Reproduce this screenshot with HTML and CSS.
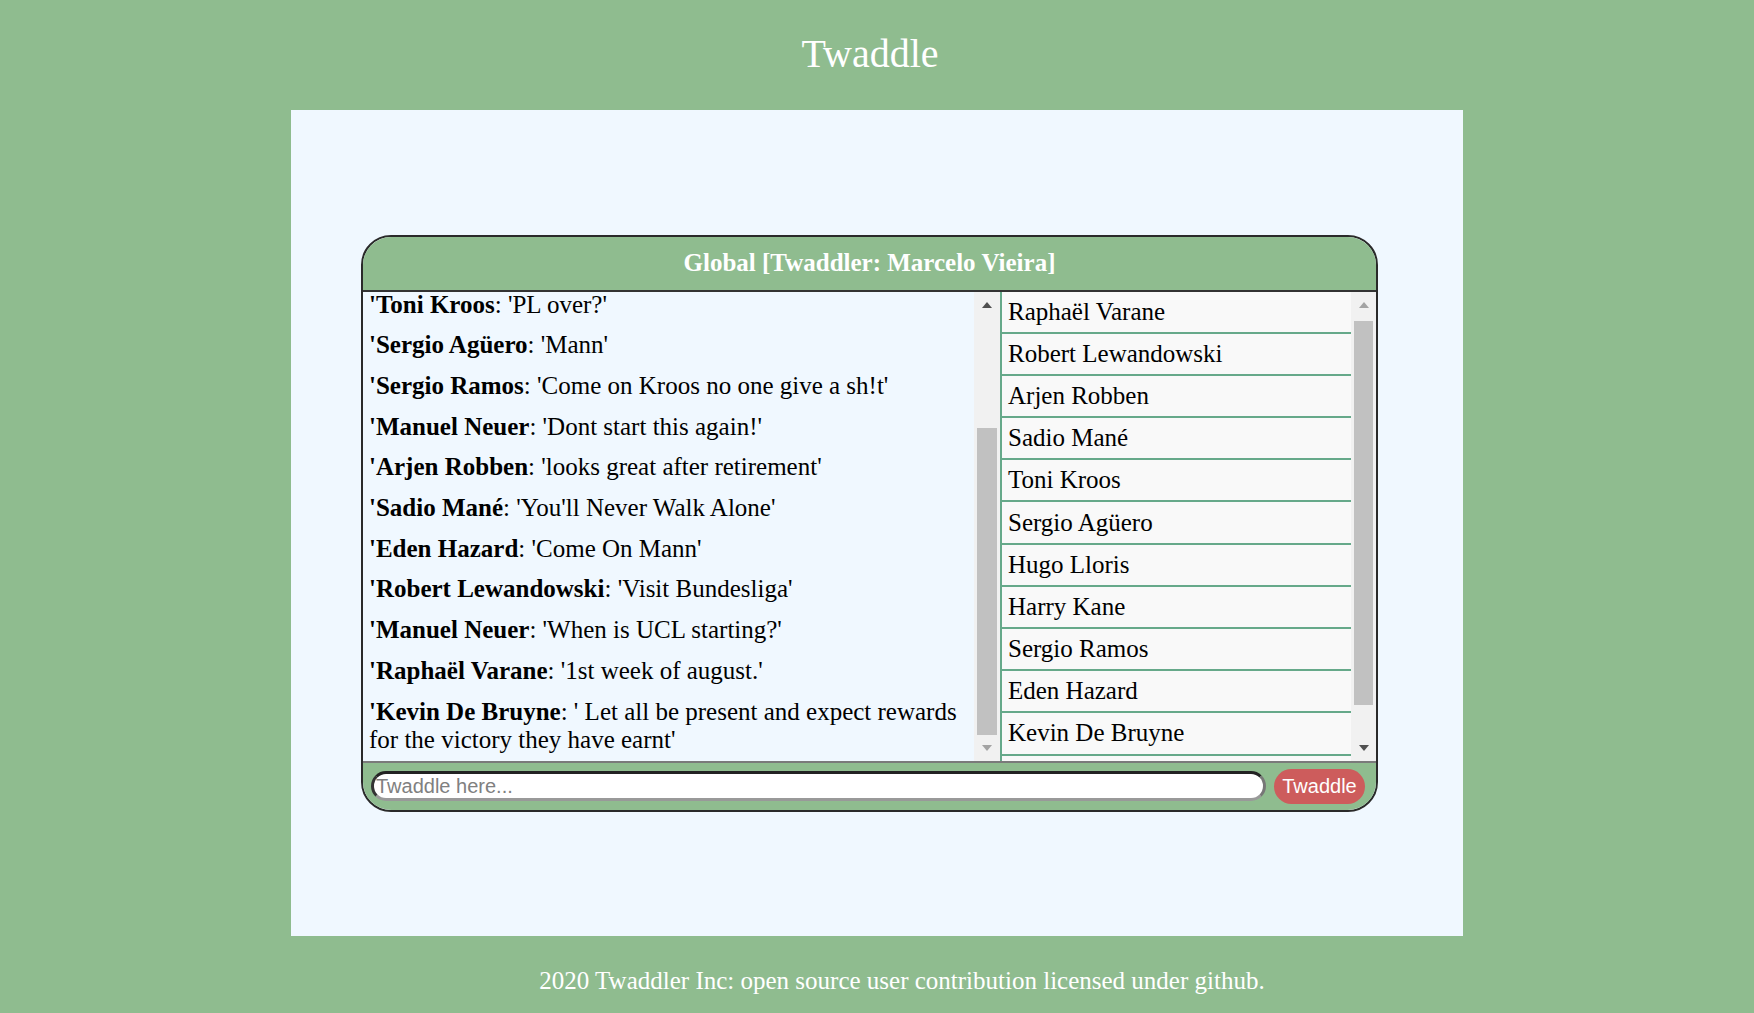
FILE: index.html
```html
<!DOCTYPE html>
<html>
<head>
<meta charset="utf-8">
<title>Twaddle</title>
<link rel="stylesheet" href="styles.css">
</head>
<body>
<h1 class="title">Twaddle</h1>
<main class="container">
  <section class="chat">
    <div class="chat-header">Global [Twaddler: Marcelo Vieira]</div>
    <div class="chat-body">
      <div class="messages">
        <div class="msg"><b>'Toni Kroos</b>: 'PL over?'</div>
        <div class="msg"><b>'Sergio Agüero</b>: 'Mann'</div>
        <div class="msg"><b>'Sergio Ramos</b>: 'Come on Kroos no one give a sh!t'</div>
        <div class="msg"><b>'Manuel Neuer</b>: 'Dont start this again!'</div>
        <div class="msg"><b>'Arjen Robben</b>: 'looks great after retirement'</div>
        <div class="msg"><b>'Sadio Mané</b>: 'You'll Never Walk Alone'</div>
        <div class="msg"><b>'Eden Hazard</b>: 'Come On Mann'</div>
        <div class="msg"><b>'Robert Lewandowski</b>: 'Visit Bundesliga'</div>
        <div class="msg"><b>'Manuel Neuer</b>: 'When is UCL starting?'</div>
        <div class="msg"><b>'Raphaël Varane</b>: '1st week of august.'</div>
        <div class="msg"><b>'Kevin De Bruyne</b>: ' Let all be present and expect rewards for the victory they have earnt'</div>
      </div>
      <div class="sb sb-msg">
        <div class="sb-btn"><span class="arrow up dark"></span></div>
        <div class="sb-track"><div class="sb-thumb" style="margin-top:110px;height:307px"></div></div>
        <div class="sb-btn"><span class="arrow down light"></span></div>
      </div>
      <ul class="users">
        <li>Raphaël Varane</li>
        <li>Robert Lewandowski</li>
        <li>Arjen Robben</li>
        <li>Sadio Mané</li>
        <li>Toni Kroos</li>
        <li>Sergio Agüero</li>
        <li>Hugo Lloris</li>
        <li>Harry Kane</li>
        <li>Sergio Ramos</li>
        <li>Eden Hazard</li>
        <li>Kevin De Bruyne</li>
        <li>Manuel Neuer</li>
      </ul>
      <div class="sb sb-users">
        <div class="sb-btn"><span class="arrow up light"></span></div>
        <div class="sb-track"><div class="sb-thumb" style="margin-top:3px;height:384px"></div></div>
        <div class="sb-btn"><span class="arrow down dark"></span></div>
      </div>
    </div>
    <form class="chat-input">
      <input class="text" type="text" placeholder="Twaddle here...">
      <button class="send" type="button">Twaddle</button>
    </form>
  </section>
</main>
<footer class="footer">2020 Twaddler Inc: open source user contribution licensed under github.</footer>
</body>
</html>
```
FILE: styles.css
```css
html, body {
  margin: 0;
  padding: 0;
}
body {
  background: #8fbc8f;
  font-family: "Liberation Serif", "Times New Roman", serif;
  font-size: 25px;
  color: #000;
}
.title {
  margin: 0;
  height: 110px;
  padding: 31px 14px 0 0;
  box-sizing: border-box;
  text-align: center;
  color: #fff;
  font-weight: normal;
  font-size: 40px;
  line-height: 46px;
}
.container {
  width: 1172px;
  height: 826px;
  margin: 0 auto;
  background: #f0f8ff;
  display: flex;
  align-items: center;
}
.chat {
  width: 1013px;
  margin-left: 70px;
  border: 2px solid #2a2a2a;
  border-radius: 30px;
  overflow: hidden;
  background: #f0f8ff;
}
.chat-header {
  height: 53px;
  background: #8fbc8f;
  border-bottom: 2px solid #333;
  color: #fff;
  font-weight: bold;
  font-size: 25px;
  display: flex;
  align-items: center;
  justify-content: center;
}
.chat-body {
  display: flex;
  height: 469px;
}
.messages {
  width: 611px;
  box-sizing: border-box;
  padding: 0 6px;
  overflow: hidden;
  background: #f0f8ff;
}
.msg {
  line-height: 28.7px;
  margin-bottom: 12px;
}
.msg:first-child {
  margin-top: -1px;
}
.sb {
  display: flex;
  flex-direction: column;
  background: #f1f1f1;
}
.sb-msg {
  width: 26px;
}
.sb-users {
  width: 25px;
}
.sb-btn {
  height: 26px;
  display: flex;
  align-items: center;
  justify-content: center;
}
.sb-track {
  flex: 1;
  padding: 0 3px;
}
.sb-thumb {
  background: #c1c1c1;
}
.arrow {
  width: 0;
  height: 0;
  border-left: 5.5px solid transparent;
  border-right: 5.5px solid transparent;
}
.arrow.up {
  border-bottom: 6px solid #505050;
}
.arrow.down {
  border-top: 6px solid #505050;
}
.arrow.up.light {
  border-bottom-color: #a3a3a3;
}
.arrow.down.light {
  border-top-color: #a3a3a3;
}
.users {
  list-style: none;
  margin: 0;
  padding: 0;
  width: 349px;
  border-left: 2px solid #66a98a;
  background: #f9f9f9;
  overflow: hidden;
}
.users li {
  height: 40.2px;
  border-bottom: 2px solid #66a98a;
  padding-left: 6px;
  display: flex;
  align-items: center;
  font-size: 25px;
}
.chat-input {
  margin: 0;
  height: 47px;
  background: #8fbc8f;
  border-top: 2px solid #7a7a7a;
  display: flex;
  align-items: center;
  padding: 0 11px 0 8px;
  gap: 8px;
}
.text {
  flex: 1;
  height: 30px;
  box-sizing: border-box;
  border-radius: 15px;
  border-style: solid;
  border-width: 3px;
  border-color: #222 #777 #999 #333;
  background: #fff;
  padding: 0 2px;
  font-family: "Liberation Sans", Arial, sans-serif;
  font-size: 20px;
  outline: none;
}
.text::placeholder {
  color: #808080;
}
.send {
  width: 91px;
  height: 35px;
  border: none;
  border-radius: 18px;
  background: #cd5c5c;
  color: #fff;
  font-family: "Liberation Sans", Arial, sans-serif;
  font-size: 20px;
  padding: 0;
}
.footer {
  text-align: center;
  color: #fff;
  font-size: 25px;
  line-height: 28px;
  padding: 31px 0 0 50px;
}
```
